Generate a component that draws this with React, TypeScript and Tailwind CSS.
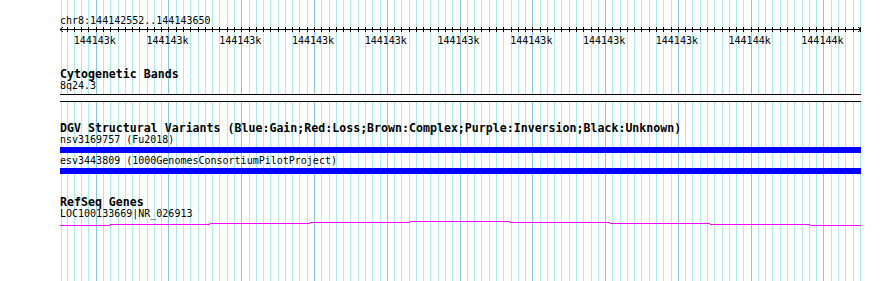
import React from "react";

const START = 144142552;
const END = 144143650;
const X0 = 60.8;
const SCALE = 799 / (END - START);

const toX = (bp: number) => X0 + (bp - START) * SCALE;

const ticks: number[] = [];
for (let bp = Math.ceil(START / 10) * 10; bp <= END; bp += 10) ticks.push(bp);

const genePath = [
  [60, 110, 225],
  [110, 210, 224],
  [210, 310, 223],
  [310, 410, 222],
  [410, 510, 221],
  [510, 610, 222],
  [610, 710, 223],
  [710, 810, 224],
  [810, 861, 225],
];

function Grid() {
  return (
    <svg className="absolute inset-0" width={890} height={281} shapeRendering="crispEdges">
      <line x1={61.5} x2={61.5} y1={0} y2={281} stroke="#a9ebee" />
      {ticks.map((bp) => {
        const x = Math.round(toX(bp)) + 0.5;
        const major = bp % 100 === 0;
        return (
          <line
            key={bp}
            x1={x}
            x2={x}
            y1={0}
            y2={281}
            stroke={major ? "#86c6e6" : "#a9ebee"}
          />
        );
      })}
    </svg>
  );
}

function Ruler() {
  return (
    <svg width={890} height={20} className="-ml-[60px] block" shapeRendering="crispEdges">
      <line x1={60} x2={861} y1={3.5} y2={3.5} stroke="#000" />
      <polyline points="63,1 60,3.5 63,6" fill="none" stroke="#000" shapeRendering="auto" />
      <polyline points="858,1 861,3.5 858,6" fill="none" stroke="#000" shapeRendering="auto" />
      {ticks.map((bp) => {
        const x = Math.round(toX(bp)) + 0.5;
        return <line key={bp} x1={x} x2={x} y1={1} y2={6} stroke="#000" />;
      })}
      {ticks
        .filter((bp) => bp % 100 === 0)
        .map((bp) => (
          <text
            key={bp}
            x={toX(bp) - 1}
            y={17.5}
            textAnchor="middle"
            fontSize={10}
            fill="#000"
          >
            {Math.round(bp / 1000)}k
          </text>
        ))}
    </svg>
  );
}

function Title({ children, className = "" }: { children: React.ReactNode; className?: string }) {
  return (
    <div className={`h-[12px] whitespace-nowrap text-[11.6px] leading-[12px] font-bold ${className}`}>
      {children}
    </div>
  );
}

function Label({ children, className = "" }: { children: React.ReactNode; className?: string }) {
  return (
    <div className={`h-[10px] whitespace-nowrap text-[10px] leading-[10px] ${className}`}>
      {children}
    </div>
  );
}

export default function App() {
  return (
    <div className="relative h-[281px] w-[890px] overflow-hidden bg-white font-['DejaVu_Sans_Mono',monospace] text-black">
      <Grid />
      <div className="relative flex w-[861px] flex-col pl-[60px] pt-[16px]">
        <Label>chr8:144142552..144143650</Label>
        <Ruler />

        {/* Cytogenetic bands */}
        <Title className="mt-[22px]">Cytogenetic Bands</Title>
        <Label className="mt-[1px]">8q24.3</Label>
        <div className="mt-[3px] h-[8px] border-y border-black bg-white" />

        {/* DGV */}
        <Title className="mt-[20px]">
          DGV Structural Variants (Blue:Gain;Red:Loss;Brown:Complex;Purple:Inversion;Black:Unknown)
        </Title>
        <Label className="mt-[1px]">nsv3169757 (Fu2018)</Label>
        <div className="mt-[2px] h-[6px] bg-[#0000ff]" />
        <Label className="mt-[3px]">esv3443809 (1000GenomesConsortiumPilotProject)</Label>
        <div className="mt-[2px] h-[6px] bg-[#0000ff]" />

        {/* RefSeq */}
        <Title className="mt-[22px]">RefSeq Genes</Title>
        <Label className="mt-[1px]">LOC100133669|NR_026913</Label>
        <svg width={890} height={8} className="-ml-[60px] block" shapeRendering="crispEdges">
          {genePath.map(([a, b, y]) => (
            <line key={a} x1={a} x2={b} y1={y - 219 + 0.5} y2={y - 219 + 0.5} stroke="#ff00ff" />
          ))}
        </svg>
      </div>
    </div>
  );
}
